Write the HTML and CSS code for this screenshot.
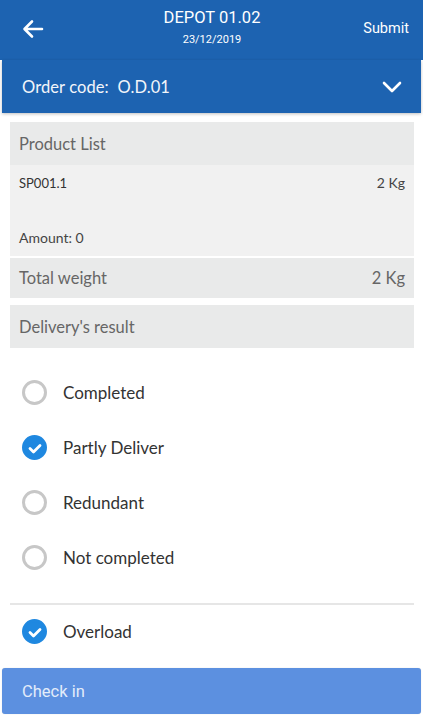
FILE: index.html
```html
<!DOCTYPE html>
<html>
<head>
<meta charset="utf-8">
<link rel="stylesheet" href="styles.css">
</head>
<body>
<div class="screen">
  <header class="topbar">
    <div class="back">
      <svg width="22" height="20" viewBox="0 0 22 20"><path d="M20 10H3M10 2.5L2.5 10L10 17.5" fill="none" stroke="#fff" stroke-width="2.6" stroke-linecap="round" stroke-linejoin="round"/></svg>
    </div>
    <div class="title">
      <div class="title-main">DEPOT 01.02</div>
      <div class="title-sub">23/12/2019</div>
    </div>
    <div class="submit">Submit</div>
  </header>
  <div class="order">
    <span class="order-label">Order code:&nbsp; O.D.01</span>
    <svg width="20" height="12" viewBox="0 0 20 12"><path d="M2 2L10 10L18 2" fill="none" stroke="#fff" stroke-width="2.6" stroke-linecap="round" stroke-linejoin="round"/></svg>
  </div>
  <main class="content">
    <section class="card">
      <div class="card-head">Product List</div>
      <div class="product">
        <div class="product-row"><span>SP001.1</span><span class="kg">2 Kg</span></div>
        <div class="product-amount">Amount: 0</div>
      </div>
      <div class="total"><span>Total weight</span><span>2 Kg</span></div>
    </section>
    <div class="card-head result">Delivery's result</div>
    <ul class="options">
      <li class="option"><span class="radio"></span>Completed</li>
      <li class="option"><span class="radio checked"><svg width="14" height="11" viewBox="0 0 14 11"><path d="M2 5.5L5.5 9L12 2.5" fill="none" stroke="#fff" stroke-width="2.8" stroke-linecap="round" stroke-linejoin="round"/></svg></span>Partly Deliver</li>
      <li class="option"><span class="radio"></span>Redundant</li>
      <li class="option"><span class="radio"></span>Not completed</li>
    </ul>
    <div class="divider"></div>
    <div class="option overload"><span class="radio checked"><svg width="14" height="11" viewBox="0 0 14 11"><path d="M2 5.5L5.5 9L12 2.5" fill="none" stroke="#fff" stroke-width="2.8" stroke-linecap="round" stroke-linejoin="round"/></svg></span>Overload</div>
  </main>
  <button class="checkin">Check in</button>
</div>
</body>
</html>
```
FILE: styles.css
```css
* { box-sizing: border-box; }
html, body { margin: 0; padding: 0; background: #fff; }
body { font-family: Lato, "Noto Sans", sans-serif; }
.screen { width: 423px; height: 716px; display: flex; flex-direction: column; overflow: hidden; }

.topbar {
  height: 60px; background: #1d63b1; color: #fff;
  display: flex; align-items: center; padding: 0 14px 5px 22px;
}
.back { width: 60px; display: flex; align-items: center; padding-top: 2px; }
.title { flex: 1; text-align: center; display: flex; flex-direction: column; align-items: center; padding-right: 7px; }
.title-main { font-family: Roboto, sans-serif; font-size: 16.5px; line-height: 20px; }
.title-sub { font-family: Roboto, sans-serif; font-size: 11px; line-height: 14px; margin-top: 5px; }
.submit { font-family: Roboto, sans-serif; font-size: 14.5px; width: 60px; text-align: right; padding-top: 2px; }

.order {
  margin: 0 2px; height: 53px; background: #1d63b1; color: #f2f5fa;
  display: flex; align-items: center; justify-content: space-between;
  padding: 0 19px 0 20px; box-shadow: 0 1px 3px rgba(0,0,0,0.25);
}
.order-label { font-size: 16.5px; letter-spacing: 0.1px; }

.content { flex: 1; padding: 9px 9px 0 10px; }
.card-head {
  background: #e9eaea; height: 43px; padding: 0 9px;
  display: flex; align-items: center; font-size: 16.5px; color: #666;
}
.product { background: #f1f1f1; height: 91px; padding: 9px 9px 0; font-size: 13px; color: #333; }
.product-row { display: flex; justify-content: space-between; line-height: 18px; }
.product-row .kg { font-size: 14px; color: #444; }
.product-amount { margin-top: 37px; line-height: 18px; color: #444; font-size: 14px; }
.total {
  margin-top: 2px; background: #e9eaea; height: 40px; padding: 0 9px;
  display: flex; align-items: center; justify-content: space-between; font-size: 16.5px; color: #666;
}
.result { margin-top: 7px; }

.options { list-style: none; margin: 17px 0 0; padding: 0; }
.option {
  height: 55px; display: flex; align-items: center; padding-left: 12px;
  font-size: 17px; color: #333;
}
.radio {
  width: 25px; height: 25px; border-radius: 50%; border: 3px solid #c7c7c7;
  margin-right: 16px; display: flex; align-items: center; justify-content: center; flex: none;
}
.radio.checked { background: #1f88e0; border-color: #1f88e0; }
.radio.checked svg { margin-top: 1px; }
.divider { height: 2px; background: #e6e6e6; margin-top: 18px; }
.overload { height: 53px; }

.checkin {
  margin: 0 2px 2px; height: 46px; background: #5c90e0; border: none; border-radius: 3px;
  color: #e3ecfa; font-family: Roboto, sans-serif; font-size: 16.5px; text-align: left; padding: 0 20px;
  box-shadow: 0 0 1px rgba(0,0,0,0.2);
}
```
